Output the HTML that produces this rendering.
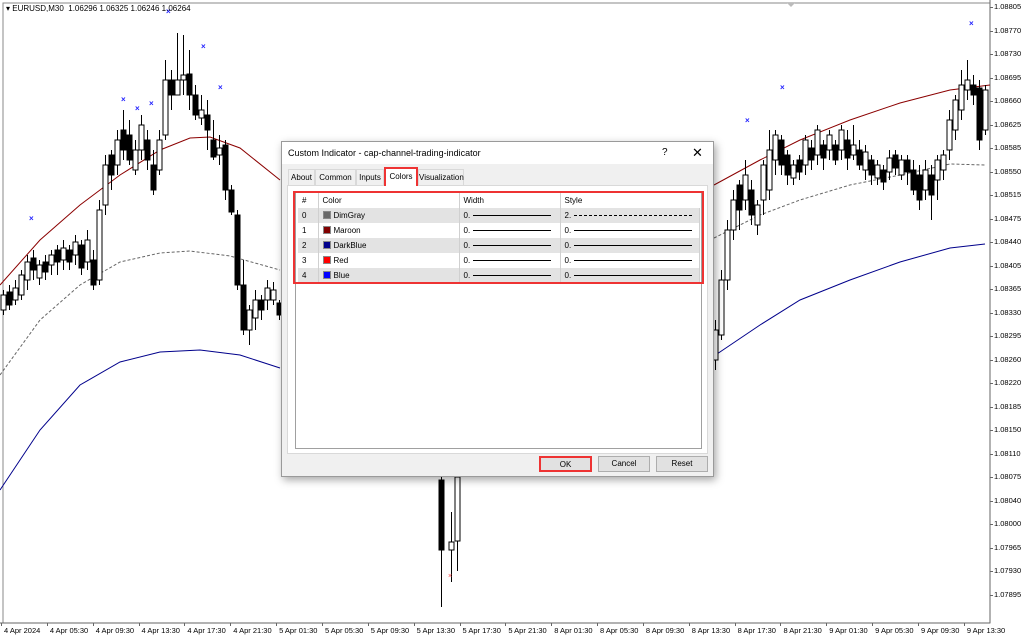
<!DOCTYPE html>
<html><head><meta charset="utf-8"><style>
*{margin:0;padding:0;box-sizing:border-box}
body{width:1024px;height:639px;background:#fff;font-family:"Liberation Sans",sans-serif;font-size:8px;color:#000;position:relative;overflow:hidden}
.ax{position:absolute;font-size:7.5px;white-space:nowrap}
.dlg{position:absolute;left:281px;top:141px;width:433px;height:336px;background:#f0f0f0;border:1px solid #9a9a9a;box-shadow:2px 3px 8px rgba(0,0,0,.35)}
.tb{height:22px;background:#fff;font-size:9px;line-height:22px;padding-left:6px;position:relative}
.tab{position:absolute;top:27px;height:16px;font-size:8px;line-height:15px;border:1px solid #d9d9d9;border-bottom:none;text-align:center;background:#f0f0f0}
.panel{position:absolute;left:5px;top:43px;width:421px;height:269px;background:#fff;border:1px solid #d9d9d9}
.list{position:absolute;left:7px;top:5px;width:407px;height:258px;border:1px solid #a0a0a0;background:#fff}
table{border-collapse:collapse;position:absolute;left:2px;top:1px;width:402px;font-size:8px;table-layout:fixed}
td{height:15px;line-height:14px;padding:0 0 0 4px;border-right:1px solid #d0d0d0;white-space:nowrap;overflow:hidden}
tr.g td{background:#e3e3e3}
.sw{display:inline-block;width:8px;height:8px;vertical-align:-1px;margin-right:3px;border:1px solid #888}
.ln{display:inline-block;height:1px;background:#000;vertical-align:2px;margin-left:3px}
.btn{position:absolute;top:314px;height:16px;background:#e1e1e1;border:1px solid #adadad;font-size:8px;text-align:center;line-height:14px}
</style></head><body>
<svg width="1024" height="639" style="position:absolute;left:0;top:0">
<rect x="3" y="3" width="987" height="620" fill="none" stroke="#888" stroke-width="1"/>
<line x1="990" y1="0" x2="990" y2="623" stroke="#666"/>
<line x1="0" y1="623" x2="990" y2="623" stroke="#666"/>
<polygon points="787,3 795,3 791,7" fill="#bbb"/>
<polyline fill="none" stroke="#8b0000" stroke-width="1" points="0,285 40,240 80,205 120,175 160,150 190,138 210,137 240,148 280,180"/>
<polyline fill="none" stroke="#8b0000" stroke-width="1" points="714,185 760,160 800,140 850,120 900,103 950,90 990,85"/>
<polyline fill="none" stroke="#00008b" stroke-width="1" points="0,490 40,430 80,385 120,362 160,352 200,350 240,355 280,368"/>
<polyline fill="none" stroke="#00008b" stroke-width="1" points="714,356 760,325 800,300 850,280 900,262 950,248 985,244"/>
<polyline fill="none" stroke="#666" stroke-dasharray="3,2" stroke-width="1" points="0,375 40,320 80,285 120,262 160,253 190,251 230,256 280,270"/>
<polyline fill="none" stroke="#666" stroke-dasharray="3,2" stroke-width="1" points="714,238 760,215 800,200 850,185 900,175 950,164 985,165"/>
<g id="c" stroke="#000" stroke-width="1"></g>
<g fill="#22f" font-size="8" font-weight="bold">
<text x="166" y="14">×</text><text x="201" y="49">×</text><text x="121" y="102">×</text><text x="135" y="111">×</text><text x="149" y="106">×</text><text x="218" y="90">×</text><text x="29" y="221">×</text><text x="745" y="123">×</text><text x="780" y="90">×</text><text x="969" y="26">×</text>
</g>
<text x="448" y="578" fill="#f44" font-size="7">×</text>
</svg>
<script>
var L=[[3,290,315,295,310,0],[9,285,310,292,305,1],[15,280,305,288,300,0],[21,270,300,275,295,0],[27,255,290,262,280,0],[33,250,280,258,270,1],[39,260,285,265,278,0],[45,255,280,262,272,1],[51,250,275,255,265,0],[57,245,275,250,262,1],[63,240,270,248,260,0],[69,245,270,250,262,1],[75,235,265,242,255,0],[81,240,275,245,268,1],[87,230,270,240,262,0],[93,250,290,260,285,1],[99,200,285,210,280,0],[105,155,215,165,205,0],[111,150,190,155,175,1],[117,130,175,140,165,0],[123,110,160,130,150,1],[129,120,165,135,160,1],[135,140,175,150,170,0],[141,115,160,125,150,0],[147,130,170,140,160,1],[153,150,195,165,190,1],[159,130,175,140,170,0],[165,60,140,80,135,0],[171,70,110,80,95,1],[177,33,95,80,95,0],[183,35,95,75,80,0],[189,50,110,74,95,1],[195,85,120,95,115,1],[201,95,125,110,118,0],[207,100,150,115,130,1],[213,120,160,140,157,1],[219,135,165,148,155,0],[225,140,200,145,190,1],[231,185,215,190,212,1],[237,210,290,215,285,1],[243,260,335,285,330,1],[249,305,345,310,330,0],[255,290,330,300,318,0],[261,295,320,300,310,1],[267,280,310,288,300,0],[273,282,305,290,300,0],[279,300,320,303,315,1],
[715,320,370,330,360,0],[721,270,340,280,335,0],[727,220,290,230,280,0],[733,190,240,200,230,0],[739,180,230,185,210,1],[745,160,210,175,200,0],[751,180,225,190,215,1],[757,200,235,205,225,0],[763,160,215,165,200,0],[769,130,200,150,190,0],[775,130,175,135,160,0],[781,135,175,140,165,1],[787,150,185,155,175,1],[793,160,185,165,178,0],[799,155,180,160,172,1],[805,135,175,140,165,0],[811,140,170,148,160,1],[817,125,165,130,155,0],[823,140,170,145,158,1],[829,130,160,135,150,0],[835,140,165,145,160,1],[841,125,160,130,150,0],[847,130,170,140,158,1],[853,125,160,145,155,0],[859,140,170,150,165,1],[865,145,180,152,170,0],[871,155,185,160,175,1],[877,160,185,165,178,0],[883,165,190,170,182,1],[889,150,180,158,172,0],[895,150,175,155,168,1],[901,155,180,160,175,0],[907,155,185,160,172,1],[913,160,195,170,190,1],[919,165,210,175,200,1],[925,160,200,170,190,0],[931,165,220,175,195,1],[937,155,200,160,180,0],[943,150,180,155,170,0],[949,110,160,120,150,0],[955,95,140,100,130,0],[961,70,120,85,110,0],[967,60,100,80,90,0],[973,75,105,85,95,1],[979,80,150,88,140,1],[985,85,135,90,130,0],
[441,477,607,480,550,1],[451,512,582,542,550,0],[457,477,571,477,541,0]];
var g=document.getElementById('c'),s='';
L.forEach(function(c){s+='<line x1="'+c[0]+'.5" y1="'+c[1]+'" x2="'+c[0]+'.5" y2="'+c[2]+'"/><rect x="'+(c[0]-2)+'" y="'+c[3]+'" width="5" height="'+(c[4]-c[3])+'" fill="'+(c[5]?'#000':'#fff')+'"/>';});
g.innerHTML=s;
</script>
<div class="ax" style="left:6px;top:4px;font-size:8px">▾ EURUSD,M30&nbsp; 1.06296 1.06325 1.06246 1.06264</div>
<div id="pa"></div>
<script>
var p=["1.08805","1.08770","1.08730","1.08695","1.08660","1.08625","1.08585","1.08550","1.08515","1.08475","1.08440","1.08405","1.08365","1.08330","1.08295","1.08260","1.08220","1.08185","1.08150","1.08110","1.08075","1.08040","1.08000","1.07965","1.07930","1.07895"],h='';
p.forEach(function(v,i){var y=7+i*23.52;h+='<div class="ax" style="left:994px;top:'+(y-5)+'px">'+v+'</div><div style="position:absolute;left:990px;top:'+y+'px;width:3px;height:1px;background:#666"></div>';});
var t=["4 Apr 2024","4 Apr 05:30","4 Apr 09:30","4 Apr 13:30","4 Apr 17:30","4 Apr 21:30","5 Apr 01:30","5 Apr 05:30","5 Apr 09:30","5 Apr 13:30","5 Apr 17:30","5 Apr 21:30","8 Apr 01:30","8 Apr 05:30","8 Apr 09:30","8 Apr 13:30","8 Apr 17:30","8 Apr 21:30","9 Apr 01:30","9 Apr 05:30","9 Apr 09:30","9 Apr 13:30"];
t.forEach(function(v,i){var x=4+i*45.85;h+='<div class="ax" style="left:'+x+'px;top:626px">'+v+'</div><div style="position:absolute;left:'+(x-3)+'px;top:623px;width:1px;height:3px;background:#666"></div>';});
document.getElementById('pa').innerHTML=h;
</script>
<div class="dlg">
<div class="tb">Custom Indicator - cap-channel-trading-indicator<span style="position:absolute;left:380px;font-size:10px">?</span><span style="position:absolute;left:410px;font-size:13px">✕</span></div>
<div class="tab" style="left:6px;width:27px">About</div>
<div class="tab" style="left:33px;width:41px">Common</div>
<div class="tab" style="left:74px;width:28px">Inputs</div>
<div class="tab" style="left:102px;top:25px;height:19px;width:34px;background:#fff;border:2px solid #e33;border-bottom:none;z-index:2">Colors</div>
<div class="tab" style="left:136px;width:46px">Visualization</div>
<div class="panel"><div class="list">
<table>
<colgroup><col style="width:20px"><col style="width:141px"><col style="width:101px"><col></colgroup>
<tr><td>#</td><td>Color</td><td>Width</td><td style="border:none">Style</td></tr>
<tr class="g"><td>0</td><td><span class="sw" style="background:#696969"></span>DimGray</td><td>0.<span class="ln" style="width:78px"></span></td><td>2.<span class="ln" style="width:118px;background:none;border-top:1px dashed #000;height:0"></span></td></tr>
<tr><td>1</td><td><span class="sw" style="background:#800000"></span>Maroon</td><td>0.<span class="ln" style="width:78px"></span></td><td>0.<span class="ln" style="width:118px"></span></td></tr>
<tr class="g"><td>2</td><td><span class="sw" style="background:#00008b"></span>DarkBlue</td><td>0.<span class="ln" style="width:78px"></span></td><td>0.<span class="ln" style="width:118px"></span></td></tr>
<tr><td>3</td><td><span class="sw" style="background:#f00"></span>Red</td><td>0.<span class="ln" style="width:78px"></span></td><td>0.<span class="ln" style="width:118px"></span></td></tr>
<tr class="g"><td>4</td><td><span class="sw" style="background:#00f"></span>Blue</td><td>0.<span class="ln" style="width:78px"></span></td><td>0.<span class="ln" style="width:118px"></span></td></tr>
</table>
<div style="position:absolute;left:-3px;top:-1px;width:411px;height:93px;border:2px solid #e33"></div>
</div></div>
<div class="btn" style="left:257px;width:53px;border:2px solid #e33">OK</div>
<div class="btn" style="left:316px;width:52px">Cancel</div>
<div class="btn" style="left:374px;width:52px">Reset</div>
</div>
</body></html>
